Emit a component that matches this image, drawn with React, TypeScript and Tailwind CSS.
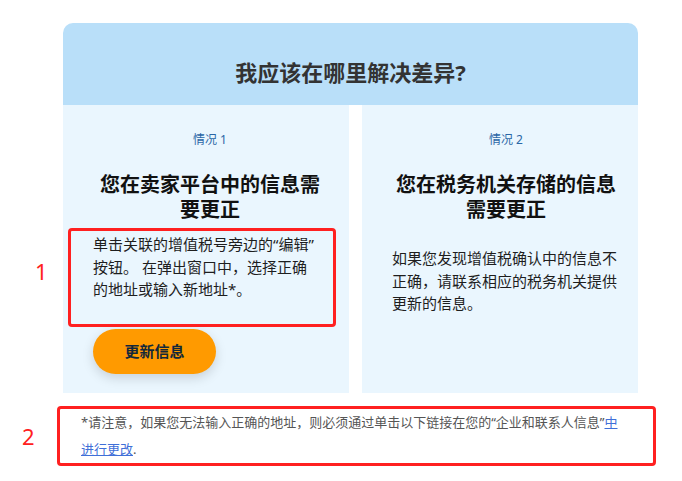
import React from "react";

export default function App() {
  return (
    <div
      className="relative w-[682px] h-[481px] bg-white overflow-hidden"
      style={{ fontFamily: '"Noto Sans", "Noto Sans CJK SC", sans-serif' }}
    >
      <div className="pt-[23px] pl-[63px]">
        <div className="w-[575px]">
          <div className="bg-[#b9dff9] rounded-t-[10px] h-[82px] pt-[34px]">
            <h2 className="text-center text-[22px] leading-[30px] font-bold text-[#333333]">
              我应该在哪里解决差异?
            </h2>
          </div>
          <div className="flex gap-[13px]">
            <div className="w-[286px] h-[288px] bg-[#eaf6fe] pt-[26px] pl-[30px] pr-[22px]">
              <p className="text-center text-[12px] leading-[18px] text-[#2b66a6]">情况 1</p>
              <h3 className="mt-[23px] text-center text-[20px] leading-[25px] font-bold text-[#111111]">
                您在卖家平台中的信息需
                <br />
                要更正
              </h3>
              <p className="mt-[11px] text-[15px] leading-[22.5px] text-[#1e1e1e] whitespace-nowrap">
                单击关联的增值税号旁边的“编辑”
                <br />
                按钮。 在弹出窗口中，选择正确
                <br />
                的地址或输入新地址*。
              </p>
              <button className="mt-[28px] w-[123px] h-[45px] rounded-full bg-[#ff9a00] text-[15px] font-bold text-[#13283a] shadow-[0_4px_12px_rgba(0,0,0,0.15)]">
                更新信息
              </button>
            </div>
            <div className="w-[276px] h-[288px] bg-[#eaf6fe] pt-[26px] pl-[30px] pr-[18px]">
              <p className="text-center text-[12px] leading-[18px] text-[#2b66a6]">情况 2</p>
              <h3 className="mt-[23px] text-center text-[20px] leading-[25px] font-bold text-[#111111]">
                您在税务机关存储的信息
                <br />
                需要更正
              </h3>
              <p className="mt-[25px] text-[15px] leading-[22.5px] text-[#1e1e1e] whitespace-nowrap">
                如果您发现增值税确认中的信息不
                <br />
                正确，请联系相应的税务机关提供
                <br />
                更新的信息。
              </p>
            </div>
          </div>
        </div>
      </div>

      <div className="relative mt-[13px] ml-[57px] w-[599px] border-[3px] border-[#ff2020] rounded-[4px] pl-[21px]">
        <p className="text-[13px] leading-[27px] text-[#555555] whitespace-nowrap">
          *请注意，如果您无法输入正确的地址，则必须通过单击以下链接在您的“企业和联系人信息”
          <a className="text-[#3f6fd8] underline">中</a>
          <br />
          <a className="text-[#3f6fd8] underline">进行更改</a>.
        </p>
      </div>

      <div className="absolute left-[68px] top-[228px] w-[268px] h-[99px] border-[3px] border-[#ff2020] rounded-[4px]" />
      <div className="absolute left-[35px] top-[260px] text-[22px] leading-none text-[#ff2020]">1</div>
      <div className="absolute left-[22px] top-[425px] text-[22px] leading-none text-[#ff2020]">2</div>
    </div>
  );
}
